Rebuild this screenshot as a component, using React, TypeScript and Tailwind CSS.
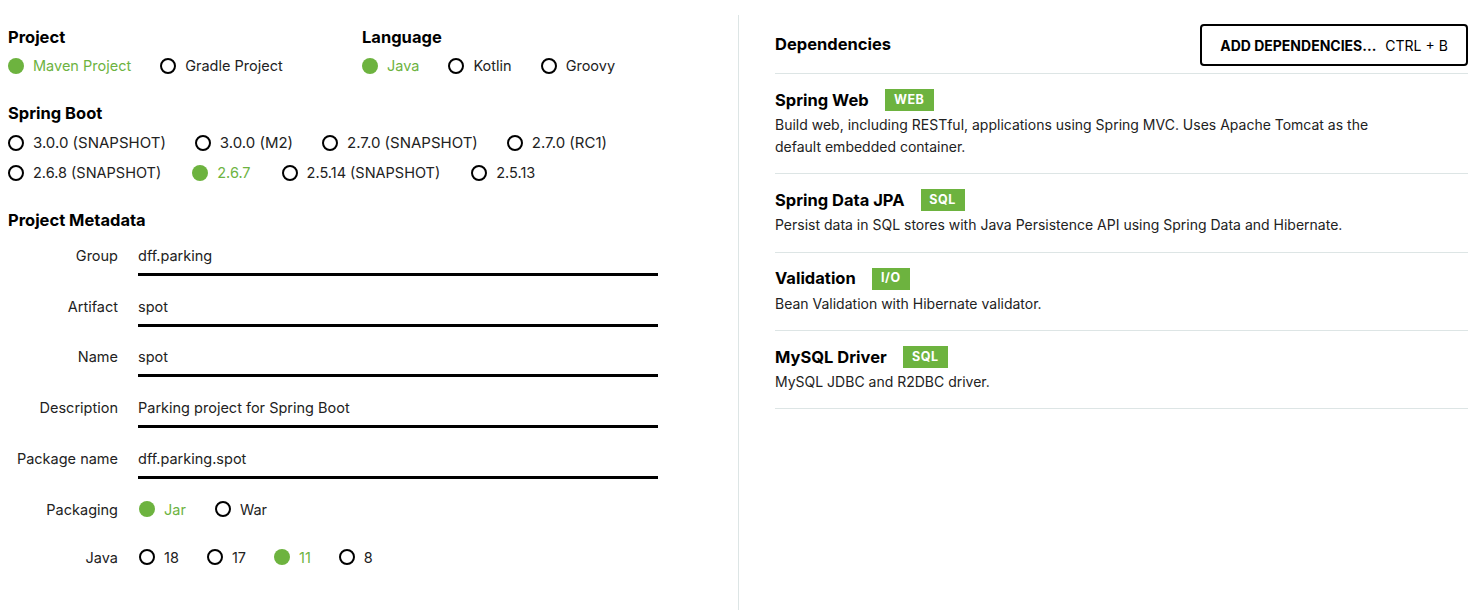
import React from "react";

function Radio({ label, selected, size = "text-[14.5px]", gap = "mr-[29px]" }: { label: string; selected?: boolean; size?: string; gap?: string }) {
  return (
    <div className={"flex items-center h-[30px] " + gap}>
      {selected ? (
        <span className="w-4 h-4 rounded-full bg-[#6db33f] shrink-0" />
      ) : (
        <span className="w-4 h-4 rounded-full border-2 border-black shrink-0" />
      )}
      <span className={"ml-[9px] whitespace-nowrap " + size + " " + (selected ? "text-[#6db33f]" : "text-[#222]")}>
        {label}
      </span>
    </div>
  );
}

function Heading({ children }: { children: React.ReactNode }) {
  return <div className="text-[16.5px] font-bold text-black leading-[22px]">{children}</div>;
}

function Field({ label, value }: { label: string; value: string }) {
  return (
    <div className="flex h-[50.7px]">
      <div className="w-[110px] text-right text-[14.5px] text-[#222] pt-[5px] leading-[20px]">{label}</div>
      <div className="ml-[20px] w-[520px] border-b-[3px] border-black h-[35px] text-[14.5px] text-[#222] pt-[5px] leading-[20px]">
        {value}
      </div>
    </div>
  );
}

function OptionRow({ label, children, className }: { label: string; children: React.ReactNode; className?: string }) {
  return (
    <div className={"flex items-center h-[30px] " + (className ?? "")}>
      <div className="w-[110px] text-right text-[14.5px] text-[#222]">{label}</div>
      <div className="ml-[21px] flex items-center">{children}</div>
    </div>
  );
}

function Dep({ title, tag, desc, tagWidth }: { title: string; tag: string; desc: React.ReactNode; tagWidth: string }) {
  return (
    <div className="border-b border-[#dde5e5] pt-[15px] pb-[15.3px]">
      <div className="flex items-center h-[22px]">
        <span className="text-[16.5px] font-bold text-black">{title}</span>
        <span className={"ml-[16px] h-[22px] bg-[#6db33f] text-white text-[12.5px] font-bold flex items-center justify-center tracking-[0.5px] " + tagWidth}>
          {tag}
        </span>
      </div>
      <div className="text-[14px] text-[#222] leading-[22px] mt-[3px]">{desc}</div>
    </div>
  );
}

export default function App() {
  return (
    <div className="flex w-[1479px] h-[610px] bg-white overflow-hidden" style={{ fontFamily: "Inter, 'Noto Sans', sans-serif" }}>
      <div className="w-[738px] shrink-0 pl-[8px] pt-[26px]">
        <div className="flex">
          <div className="w-[354px]">
            <Heading>Project</Heading>
            <div className="flex mt-[3px]">
              <Radio label="Maven Project" selected />
              <Radio label="Gradle Project" />
            </div>
          </div>
          <div>
            <Heading>Language</Heading>
            <div className="flex mt-[3px]">
              <Radio label="Java" selected />
              <Radio label="Kotlin" />
              <Radio label="Groovy" />
            </div>
          </div>
        </div>
        <div className="mt-[21px]">
          <Heading>Spring Boot</Heading>
          <div className="flex mt-[4px]">
            <Radio label="3.0.0 (SNAPSHOT)" size="text-[15px]" gap="mr-[29px]" />
            <Radio label="3.0.0 (M2)" size="text-[15px]" gap="mr-[29px]" />
            <Radio label="2.7.0 (SNAPSHOT)" size="text-[15px]" gap="mr-[29px]" />
            <Radio label="2.7.0 (RC1)" size="text-[15px]" gap="mr-[29px]" />
          </div>
          <div className="flex">
            <Radio label="2.6.8 (SNAPSHOT)" gap="mr-[31px]" />
            <Radio label="2.6.7" selected gap="mr-[31px]" />
            <Radio label="2.5.14 (SNAPSHOT)" gap="mr-[31px]" />
            <Radio label="2.5.13" gap="mr-[31px]" />
          </div>
        </div>
        <div className="mt-[21px]">
          <Heading>Project Metadata</Heading>
          <div className="mt-[10px]">
            <Field label="Group" value="dff.parking" />
            <Field label="Artifact" value="spot" />
            <Field label="Name" value="spot" />
            <Field label="Description" value="Parking project for Spring Boot" />
            <Field label="Package name" value="dff.parking.spot" />
          </div>
          <OptionRow label="Packaging">
            <Radio label="Jar" selected />
            <Radio label="War" />
          </OptionRow>
          <OptionRow label="Java" className="mt-[18px]">
            <Radio label="18" gap="mr-[28px]" />
            <Radio label="17" gap="mr-[28px]" />
            <Radio label="11" selected gap="mr-[28px]" />
            <Radio label="8" gap="mr-[28px]" />
          </OptionRow>
        </div>
      </div>
      <div className="w-px bg-[#dde5e5] mt-[15px] shrink-0" />
      <div className="flex-1 pl-[36px] pr-[11px]">
        <div className="flex items-center justify-between pt-[24px] pb-[7px] border-b border-[#dde5e5]">
          <span className="text-[16.5px] font-bold text-black -mt-[2px]">Dependencies</span>
          <button className="h-[42px] w-[268px] border-2 border-black rounded-[4px] flex items-center justify-center text-[14px]">
            <span className="font-bold">ADD DEPENDENCIES...</span>
            <span className="ml-[9px]">CTRL + B</span>
          </button>
        </div>
        <Dep
          title="Spring Web"
          tag="WEB"
          tagWidth="w-[49px]"
          desc={<>Build web, including RESTful, applications using Spring MVC. Uses Apache Tomcat as the<br />default embedded container.</>}
        />
        <Dep
          title="Spring Data JPA"
          tag="SQL"
          tagWidth="w-[44px]"
          desc="Persist data in SQL stores with Java Persistence API using Spring Data and Hibernate."
        />
        <Dep title="Validation" tag="I/O" tagWidth="w-[38px]" desc="Bean Validation with Hibernate validator." />
        <Dep title="MySQL Driver" tag="SQL" tagWidth="w-[45px]" desc="MySQL JDBC and R2DBC driver." />
      </div>
    </div>
  );
}
